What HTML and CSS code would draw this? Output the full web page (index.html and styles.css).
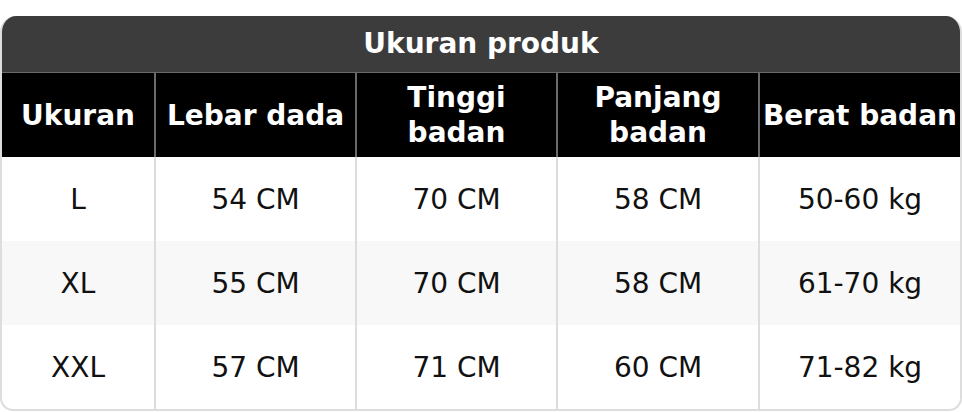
FILE: index.html
```html
<!DOCTYPE html>
<html lang="id">
<head>
<meta charset="utf-8">
<title>Ukuran produk</title>
<link rel="stylesheet" href="styles.css">
</head>
<body>
<div class="size-card">
  <div class="size-title">Ukuran produk</div>
  <table class="size-table">
    <colgroup>
      <col class="c1"><col class="c2"><col class="c3"><col class="c4"><col class="c5">
    </colgroup>
    <thead>
      <tr>
        <th>Ukuran</th>
        <th>Lebar dada</th>
        <th>Tinggi badan</th>
        <th>Panjang badan</th>
        <th>Berat badan</th>
      </tr>
    </thead>
    <tbody>
      <tr>
        <td>L</td><td>54 CM</td><td>70 CM</td><td>58 CM</td><td>50-60 kg</td>
      </tr>
      <tr class="alt">
        <td>XL</td><td>55 CM</td><td>70 CM</td><td>58 CM</td><td>61-70 kg</td>
      </tr>
      <tr>
        <td>XXL</td><td>57 CM</td><td>71 CM</td><td>60 CM</td><td>71-82 kg</td>
      </tr>
    </tbody>
  </table>
</div>
</body>
</html>
```
FILE: styles.css
```css
html, body {
  margin: 0;
  padding: 0;
  background: #ffffff;
}

body {
  font-family: "DejaVu Sans", "Liberation Sans", sans-serif;
  font-size: 28px;
  color: #111111;
}

.size-card {
  margin-top: 16px;
  width: 962px;
  box-sizing: border-box;
  border: 2px solid #dddddd;
  border-top: none;
  border-radius: 16px 16px 13px 13px;
  overflow: hidden;
  background: #ffffff;
}

.size-title {
  height: 56px;
  margin: 0 -2px;
  background: #3c3c3c;
  color: #ffffff;
  font-weight: bold;
  text-align: center;
  line-height: 56px;
}

.size-table {
  width: 958px;
  border-collapse: collapse;
  table-layout: fixed;
}

.c1 { width: 153px; }
.c2 { width: 201px; }
.c3 { width: 201px; }
.c4 { width: 202px; }
.c5 { width: 201px; }

.size-table th,
.size-table td {
  padding: 0 2px;
  text-align: center;
  vertical-align: middle;
  line-height: 35px;
}

.size-table th {
  height: 84px;
  background: #000000;
  color: #ffffff;
  font-weight: bold;
  border-top: 1px solid #6a6a6a;
}

.size-table th + th {
  border-left: 2px solid #6a6a6a;
}

.size-table td {
  height: 84px;
  color: #111111;
}

.size-table td + td {
  border-left: 2px solid #dddddd;
}

.size-table tr.alt td {
  background: #f8f8f8;
}
```
